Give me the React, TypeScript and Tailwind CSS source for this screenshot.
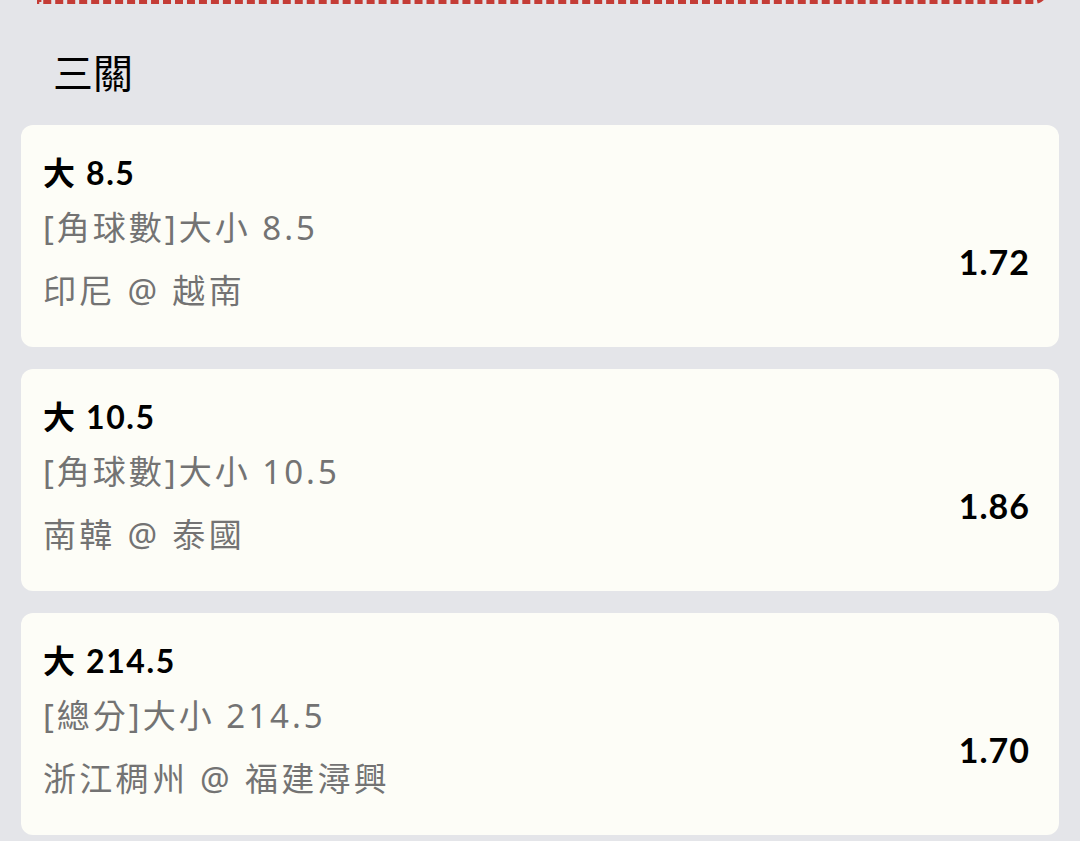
const bets = [
  { pick: "大 8.5", market: "[角球數]大小 8.5", match: "印尼 @ 越南", odds: "1.72" },
  { pick: "大 10.5", market: "[角球數]大小 10.5", match: "南韓 @ 泰國", odds: "1.86" },
  { pick: "大 214.5", market: "[總分]大小 214.5", match: "浙江稠州 @ 福建潯興", odds: "1.70" },
];

const grayFont = { fontFamily: '"Noto Sans", "Noto Sans CJK TC", sans-serif' };

function BetCard({ pick, market, match, odds }: (typeof bets)[number]) {
  return (
    <div className="flex h-[222px] rounded-[12px] bg-[#fdfdf7] pl-[22px] pr-[29px] pt-[24px]">
      <div className="flex flex-1 flex-col">
        <div className="text-[32px] font-bold leading-[48px] tracking-[1.6px] text-black">{pick}</div>
        <div className="text-[33px] leading-[62px] tracking-[3px] text-[#737373]" style={grayFont}>
          {market}
        </div>
        <div className="text-[33px] leading-[64px] tracking-[3.3px] text-[#737373]" style={grayFont}>
          {match}
        </div>
      </div>
      <div className="flex items-center pb-[24px] pt-[50px]">
        <span className="text-[34px] font-bold tracking-[1px] text-black">{odds}</span>
      </div>
    </div>
  );
}

export default function App() {
  return (
    <div
      className="min-h-[841px] overflow-hidden bg-[#e4e5e9]"
      style={{ fontFamily: 'Lato, "Noto Sans CJK TC", sans-serif' }}
    >
      <div className="-mt-[20px] ml-[37px] mr-[32px] h-[24px] rounded-br-[14px] border-b-[4px] border-dashed border-[#c43c36]" />

      <div className="px-[21px]">
        <h2 className="pl-[32px] pt-[44px] text-[40px] leading-[50px] text-black">三關</h2>

        <div className="mt-[27px] flex flex-col gap-[22px]">
          {bets.map((b) => (
            <BetCard key={b.pick} {...b} />
          ))}
        </div>
      </div>
    </div>
  );
}
